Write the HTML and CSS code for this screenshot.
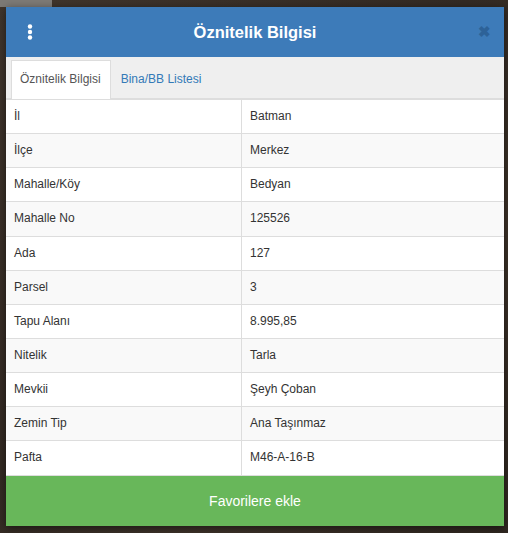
FILE: index.html
```html
<!DOCTYPE html>
<html lang="tr">

<head>
    <meta charset="UTF-8">
    <meta name="viewport" content="width=device-width, initial-scale=1.0">
    <title>Öznitelik Bilgisi</title>
    <link rel="stylesheet" href="styles.css">
</head>

<body>
    <!-- Harita arka planı -->
    <div class="map">
        <div class="map-tool"></div>

        <!-- Öznitelik penceresi -->
        <div class="modal">
            <div class="modal-header">
                <span class="menu-btn">
                    <svg width="8" height="16" viewBox="0 0 8 16">
                        <circle cx="4" cy="2.5" r="2.2" fill="#fff" />
                        <circle cx="4" cy="8" r="2.2" fill="#fff" />
                        <circle cx="4" cy="13.5" r="2.2" fill="#fff" />
                    </svg>
                </span>
                <h1>Öznitelik Bilgisi</h1>
                <span class="close-btn">&#10006;</span>
            </div>

            <!-- Sekmeler -->
            <ul class="tabs">
                <li class="active"><a href="#">Öznitelik Bilgisi</a></li>
                <li><a href="#">Bina/BB Listesi</a></li>
            </ul>

            <!-- Bilgi tablosu -->
            <table class="info-table">
                <tbody>
                    <tr><td>İl</td><td>Batman</td></tr>
                    <tr><td>İlçe</td><td>Merkez</td></tr>
                    <tr><td>Mahalle/Köy</td><td>Bedyan</td></tr>
                    <tr><td>Mahalle No</td><td>125526</td></tr>
                    <tr><td>Ada</td><td>127</td></tr>
                    <tr><td>Parsel</td><td>3</td></tr>
                    <tr><td>Tapu Alanı</td><td>8.995,85</td></tr>
                    <tr><td>Nitelik</td><td>Tarla</td></tr>
                    <tr><td>Mevkii</td><td>Şeyh Çoban</td></tr>
                    <tr><td>Zemin Tip</td><td>Ana Taşınmaz</td></tr>
                    <tr><td>Pafta</td><td>M46-A-16-B</td></tr>
                </tbody>
            </table>

            <button class="btn-fav">Favorilere ekle</button>
        </div>
    </div>
</body>

</html>
```

FILE: styles.css
```css
/* Genel */
body {
    font-family: "Liberation Sans", Arial, sans-serif;
    margin: 0;
    padding: 0;
    background-color: #3a3029;
}

.map {
    position: relative;
    height: 533px;
    padding-top: 7px;
    box-sizing: border-box;
    background: linear-gradient(135deg, #40352c 0%, #332a23 45%, #3d3229 70%, #2f2720 100%);
    overflow: hidden;
}

.map-tool {
    position: absolute;
    top: 0;
    left: 0;
    width: 52px;
    height: 7px;
    background-color: #7d7a76;
}

/* Pencere */
.modal {
    position: relative;
    margin-left: 6px;
    width: 498px;
    background-color: #fff;
    box-shadow: 0 2px 8px rgba(0, 0, 0, 0.5);
}

.modal-header {
    height: 50px;
    background-color: #3d7bb9;
    display: flex;
    align-items: center;
    justify-content: center;
    position: relative;
}

.modal-header h1 {
    margin: 0;
    color: white;
    font-size: 16.5px;
    font-weight: bold;
}

.menu-btn {
    position: absolute;
    left: 20px;
    top: 17px;
    line-height: 0;
}

.close-btn {
    position: absolute;
    right: 13px;
    top: 16px;
    color: #2d6298;
    font-size: 15px;
    font-weight: bold;
}

/* Sekmeler */
.tabs {
    list-style: none;
    margin: 0;
    padding: 3px 0 0 5px;
    background-color: #efefef;
    border-bottom: 2px solid #ddd;
    display: flex;
    height: 38px;
}

.tabs li a {
    display: block;
    padding: 10px 9px 10px 8px;
    font-size: 12px;
    line-height: 17px;
    color: #337ab7;
    text-decoration: none;
    border: 1px solid transparent;
    border-bottom: none;
}

.tabs li.active a {
    color: #555;
    background-color: #fff;
    border-color: #ddd;
    height: 18px;
}

.tabs li + li a {
    padding-left: 9px;
}

/* Tablo */
.info-table {
    width: 100%;
    border-collapse: collapse;
    font-size: 12px;
    line-height: 17.14px;
    color: #333;
}

.info-table td {
    padding: 8px;
    border: 1px solid #ddd;
    border-top: none;
}

.info-table td:first-child {
    width: 219px;
    border-left: none;
}

.info-table td:last-child {
    border-right: none;
}

.info-table tr:nth-child(even) td {
    background-color: #f9f9f9;
}

/* Buton */
.btn-fav {
    display: block;
    width: 100%;
    height: 50px;
    border: none;
    background-color: #68b75a;
    color: white;
    font-family: "Liberation Sans", Arial, sans-serif;
    font-size: 14px;
    cursor: pointer;
}
```
